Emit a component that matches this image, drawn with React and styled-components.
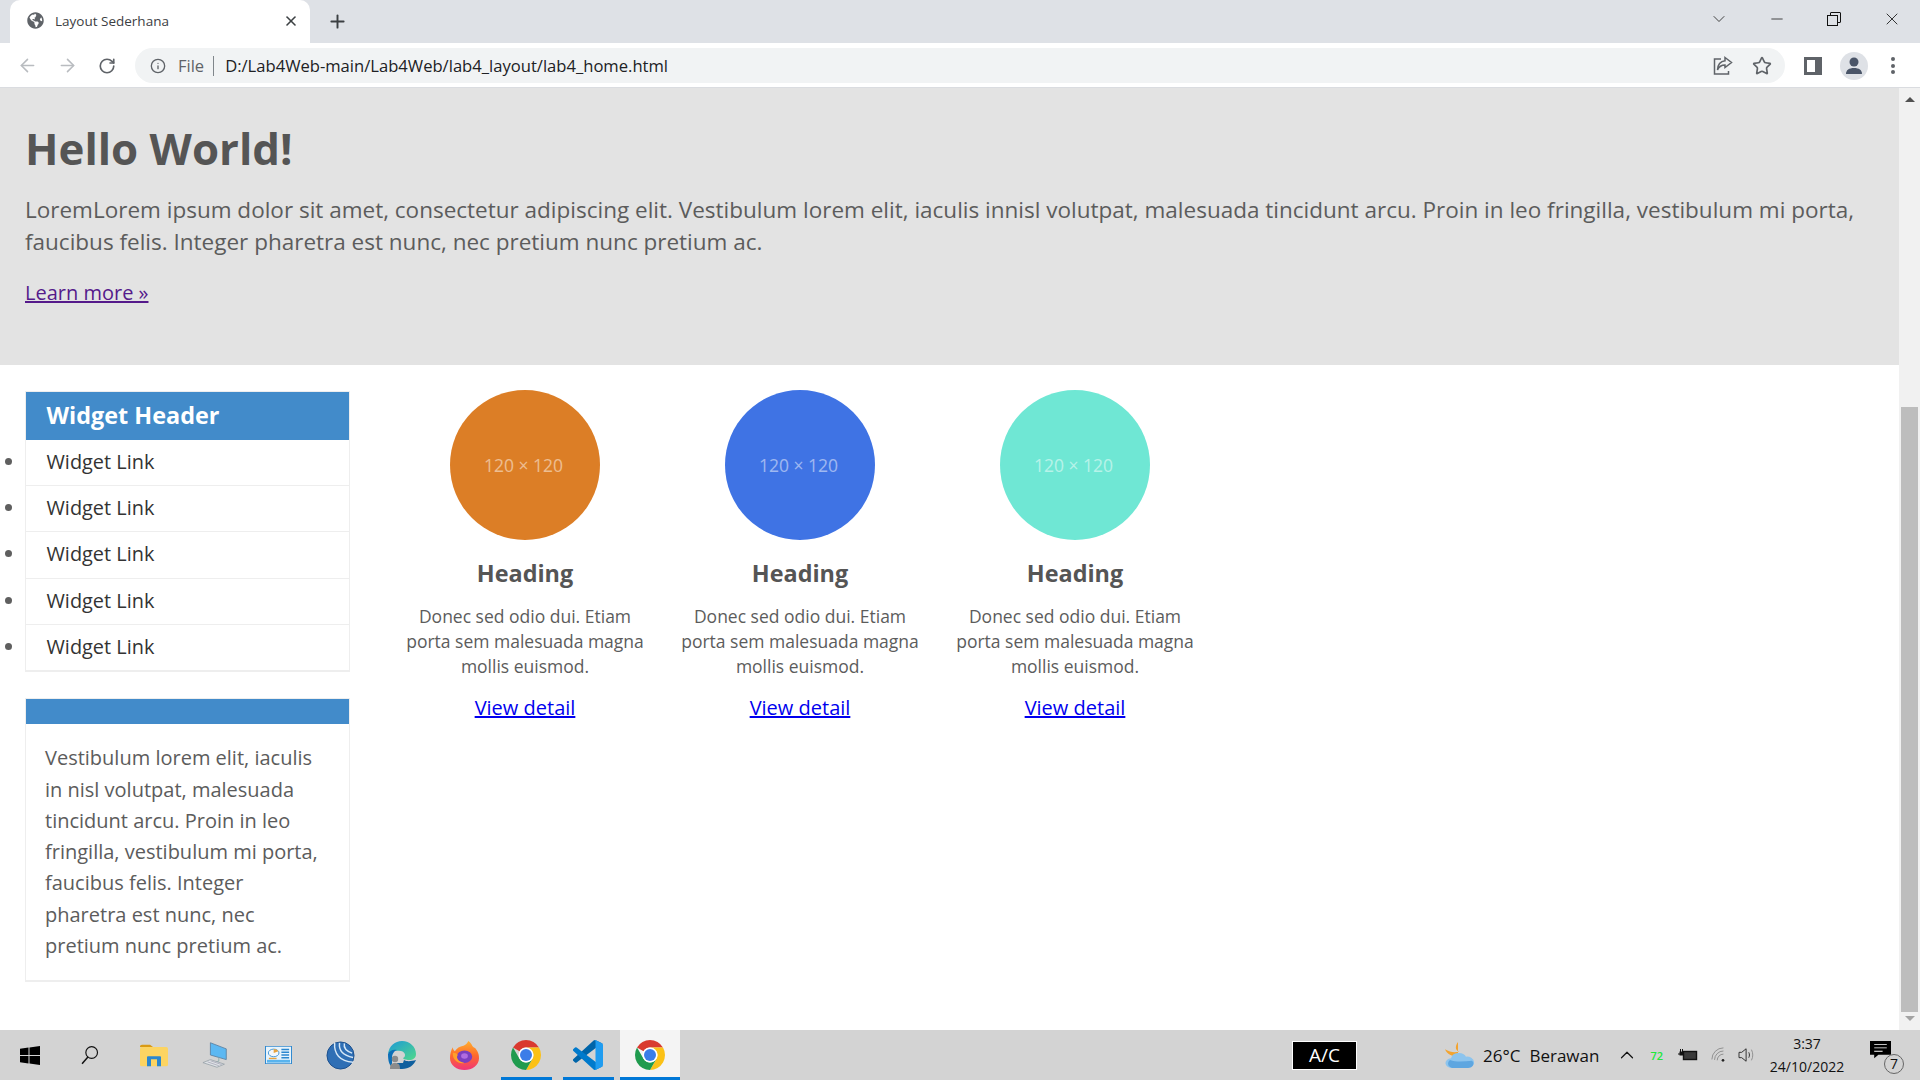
import styled, { createGlobalStyle } from 'styled-components';
import { ArrowLeft, ArrowRight, RotateCw, Info, Star, X, Plus, ChevronDown, ChevronUp, Minus } from 'lucide-react';
import { FaGlobeAmericas } from 'react-icons/fa';

const GlobalStyle = createGlobalStyle`
  html, body { margin: 0; padding: 0; height: 100%; overflow: hidden; }
  body { font-family: "Open Sans", "Liberation Sans", sans-serif; color: #555; }
  * { box-sizing: border-box; }
`;

const columns = [
  { color: '#dc7e26' },
  { color: '#3f73e4' },
  { color: '#6fe7d4' },
];

const Windows = () => (
  <svg width="20" height="19" viewBox="0 0 20 20" fill="#000" preserveAspectRatio="none">
    <path d="M0 3l8.500-1.300v7.800H0zM9.500 1.500L20 0v9.500H9.500zM0 10.500h8.500v7.800L0 17zM9.500 10.500H20V20L9.500 18.500z" />
  </svg>
);

const SearchGlass = () => (
  <svg width="20" height="20" viewBox="0 0 22 24" fill="none" stroke="#111" strokeWidth="1.400">
    <circle cx="13" cy="9" r="7" />
    <path d="M8.500 14.500L1.500 22.500" strokeWidth="1.800" />
  </svg>
);

const Folder = () => (
  <svg width="28" height="23" viewBox="0 0 28 30" preserveAspectRatio="none">
    <path d="M0 3a2 2 0 0 1 2-2h8l3 3H0z" fill="#d99a14" />
    <rect y="4" width="28" height="25" rx="2" fill="#fcd462" />
    <path d="M7 29V17a1 1 0 0 1 1-1h12a1 1 0 0 1 1 1v12h-4v-9h-6v9z" fill="#2b87cf" />
  </svg>
);

const Monitor = () => (
  <svg width="28" height="26" viewBox="0 0 30 34" preserveAspectRatio="none">
    <path d="M9 1l17 8v14L9 17z" fill="#5cb8f2" stroke="#5a7fa0" strokeWidth="1" />
    <path d="M18 20v5l-3 1" fill="none" stroke="#8aa" strokeWidth="1" />
    <path d="M1 27l8-4 15 6-8 4z" fill="#dfe3e6" stroke="#9aa3aa" strokeWidth="1" />
    <path d="M6 26l12 5M9 24.500l12 5" stroke="#aab" strokeWidth="1" />
  </svg>
);

const ControlPanel = () => (
  <svg width="27" height="18" viewBox="0 0 28 26" preserveAspectRatio="none">
    <rect x="0.500" y="0.500" width="27" height="25" fill="#e8f4fc" stroke="#2b87cf" />
    <rect x="2" y="20" width="24" height="4" fill="#59b4ee" />
    <circle cx="9" cy="10" r="5.500" fill="#f4f8fb" stroke="#2b87cf" />
    <path d="M9 10V4.500a5.500 5.500 0 0 1 5 3z" fill="#e8a33d" />
    <path d="M17 5h8M17 9h8M17 13h8M17 17h8" stroke="#2b87cf" strokeWidth="2" />
    <rect x="4" y="17" width="8" height="2" fill="#e8a33d" />
  </svg>
);

const Winbox = () => (
  <svg width="29" height="29" viewBox="0 0 30 30">
    <circle cx="15" cy="15" r="14" fill="#2f6fb5" stroke="#1b4f8c" />
    <path d="M9 2c-1 11 5 19 19 20M14 2c-1 8 3 13 14 15M19 2.500c-1 5 2 8 8 10" fill="none" stroke="#d6e8f7" strokeWidth="1.500" />
  </svg>
);

const Edge = () => (
  <svg width="30" height="30" viewBox="0 0 30 30">
    <defs>
      <linearGradient id="edgeTop" x1="0" y1="0" x2="1" y2="1">
        <stop offset="0" stopColor="#1c9ad6" />
        <stop offset="1" stopColor="#52d88b" />
      </linearGradient>
    </defs>
    <path d="M1 14C2 6 8 1 15 1c8 0 14 6 14 13 0 4-3 6-7 6-3 0-6-1-6-2 3-1 3-6-2-7-6-1-12 0-13 3z" fill="url(#edgeTop)" />
    <path d="M1 14c1-3 5-5 9-4-3 1-5 4-5 8v9C2 25 1 20 1 14z" fill="#0c6fb8" />
    <path d="M15 29c-2 0-4 0-6-1l1-5h6l1-3c3 2 8 1 12 0-2 5-7 9-14 9z" fill="#0f5f9e" />
    <circle cx="8" cy="19" r="3.200" fill="#8c8c8c" />
    <path d="M3 29c0-4 1-6 5-6s5 2 5 6z" fill="#8c8c8c" />
  </svg>
);

const Firefox = () => (
  <svg width="29" height="29" viewBox="0 0 30 37" preserveAspectRatio="none">
    <defs>
      <linearGradient id="foxBody" x1="0" y1="0" x2="0" y2="1">
        <stop offset="0" stopColor="#ffb02e" />
        <stop offset="0.500" stopColor="#ff6a2b" />
        <stop offset="1" stopColor="#f0347a" />
      </linearGradient>
    </defs>
    <path d="M19 0c5 5 3 7 7 9 4 6 4 10 4 13 0 9-7 15-15 15S0 31 0 22C0 16 1 12 3 8c0 3 1 4 2 5 2-4 5-6 9-7 2-1 4-3 5-6z" fill="url(#foxBody)" />
    <circle cx="15" cy="20" r="8" fill="#7b3fbf" />
    <circle cx="15" cy="19" r="3.500" fill="#b06ce0" />
    <path d="M3 15c3 0 4 1 5 3-2 3 0 9 7 10-6 2-13-4-12-13z" fill="#ffa02a" />
  </svg>
);

const Chrome = () => (
  <svg width="30" height="30" viewBox="4 4 40 40">
    <path d="M6.680 14A20 20 0 0 1 41.320 14H24A10 10 0 0 0 15.340 19Z" fill="#d93a2f" />
    <path d="M41.320 14A20 20 0 0 1 24 44L32.660 29A10 10 0 0 0 24 14Z" fill="#fbc116" />
    <path d="M24 44A20 20 0 0 1 6.680 14L15.340 29A10 10 0 0 0 32.660 29Z" fill="#1f9b4e" />
    <circle cx="24" cy="24" r="10" fill="#fff" />
    <circle cx="24" cy="24" r="8" fill="#3b7de8" />
  </svg>
);

const VsCode = () => (
  <svg width="30" height="30" viewBox="0 0 100 100">
    <path d="M96.460 10.800 75.860.870a6.230 6.230 0 0 0-7.100 1.200L1.300 63.600a4.160 4.160 0 0 0 0 6.160l5.500 5a4.160 4.160 0 0 0 5.300.240L93.400 13.400a4.140 4.140 0 0 1 6.600 3.300v-.240a6.250 6.250 0 0 0-3.540-5.660z" fill="#0065a9" />
    <path d="M96.460 89.200 75.860 99.130a6.230 6.230 0 0 1-7.100-1.200L1.300 36.400a4.160 4.160 0 0 1 0-6.160l5.500-5a4.160 4.160 0 0 1 5.300-.240L93.400 86.600a4.140 4.140 0 0 0 6.600-3.300v.240a6.250 6.250 0 0 1-3.540 5.660z" fill="#007acc" />
    <path d="M75.860 99.130a6.230 6.230 0 0 1-7.100-1.200c2.300 2.300 6.240.670 6.240-2.580V4.650c0-3.250-3.940-4.880-6.240-2.580a6.230 6.230 0 0 1 7.100-1.200l20.600 9.900A6.250 6.250 0 0 1 100 16.400v67.200a6.250 6.250 0 0 1-3.540 5.630z" fill="#1f9cf0" />
  </svg>
);

const Cloud = () => (
  <svg width="30" height="26" viewBox="0 0 30 32" preserveAspectRatio="none">
    <path d="M14 0c-3 5-3 10 1 12-4 1-9 1-14-3 2 6 7 9 13 9z" fill="#f3a430" />
    <path d="M8 32a6 6 0 0 1-1-12 8 8 0 0 1 15-2 7 7 0 0 1 2 14z" fill="#8cc4ee" />
    <path d="M8 32a6 6 0 0 1-2-10c6 3 14 2 22 1 3 3 1 9-4 9z" fill="#5ea6e0" />
  </svg>
);

const BatteryPlug = () => (
  <svg width="20" height="14" viewBox="0 0 20 14">
    <rect x="5.500" y="3.500" width="13" height="8" fill="#3a3a3a" stroke="#111" strokeWidth="1.400" />
    <path d="M0 6h6M2.500 1v3M4.500 1v3" stroke="#111" strokeWidth="1" />
    <rect x="1.500" y="3.500" width="4" height="4" fill="#111" />
  </svg>
);

const Wifi = () => (
  <svg width="18" height="16" viewBox="0 0 18 18" fill="none" stroke="#888" strokeWidth="1">
    <path d="M1 14a13 13 0 0 1 13-13M4 14.500a10 10 0 0 1 10-10M7 15a7 7 0 0 1 7-7" />
    <circle cx="13.500" cy="15" r="1.500" fill="#222" stroke="none" />
  </svg>
);

const Speaker = () => (
  <svg width="20" height="16" viewBox="0 0 20 18" fill="none" stroke="#222" strokeWidth="1">
    <path d="M1 6h3l5-4v14l-5-4H1z" />
    <path d="M12 6c1 2 1 4 0 6" />
    <path d="M15 3c2 4 2 8 0 12" stroke="#888" />
  </svg>
);

const taskIcons = [
  { id: 'folder', icon: <Folder /> },
  { id: 'monitor', icon: <Monitor /> },
  { id: 'panel', icon: <ControlPanel /> },
  { id: 'winbox', icon: <Winbox /> },
  { id: 'edge', icon: <Edge /> },
  { id: 'firefox', icon: <Firefox /> },
  { id: 'chrome', icon: <Chrome />, running: true },
  { id: 'vscode', icon: <VsCode />, running: true },
  { id: 'chrome2', icon: <Chrome />, active: true },
];

export default function App() {
  return (
    <>
      <GlobalStyle />
      <Screen>
        <TabStrip>
          <Tab>
            <FaGlobeAmericas size={17} color="#5f6368" />
            <TabTitle>Layout Sederhana</TabTitle>
            <X size={16} strokeWidth={2.400} color="#3c4043" />
          </Tab>
          <NewTab>
            <Plus size={21} strokeWidth={2.200} color="#3c4043" />
          </NewTab>
          <WindowControls>
            <WindowButton $width={58}><ChevronDown size={20} strokeWidth={1} color="#222" /></WindowButton>
            <WindowButton $width={57}><Minus size={18} strokeWidth={1} color="#111" /></WindowButton>
            <WindowButton $width={58}>
              <svg width="14" height="14" viewBox="0 0 14 14" fill="none" stroke="#111">
                <path d="M3.500 3V1a.5.5 0 0 1 .5-.5h9a.5.5 0 0 1 .5.5v9a.5.5 0 0 1-.5.5h-2" />
                <rect x="0.500" y="3.500" width="10" height="10" />
              </svg>
            </WindowButton>
            <WindowButton $width={57}><X size={20} strokeWidth={1} color="#111" /></WindowButton>
          </WindowControls>
        </TabStrip>

        <Toolbar>
          <NavButton><ArrowLeft size={21} color="#b9bcc0" strokeWidth={1.800} /></NavButton>
          <NavButton><ArrowRight size={21} color="#b9bcc0" strokeWidth={1.800} /></NavButton>
          <NavButton><RotateCw size={18} color="#5f6368" strokeWidth={2.200} /></NavButton>
          <AddressBar>
            <Info size={16} color="#5f6368" strokeWidth={2} />
            <FileLabel>File</FileLabel>
            <AddressDivider />
            <Url>D:/Lab4Web-main/Lab4Web/lab4_layout/lab4_home.html</Url>
            <AddressIcons>
              <svg width="20" height="20" viewBox="0 0 20 20" fill="none" stroke="#5f6368" strokeWidth="1.500">
                <path d="M8 3H1.500v15h14v-3" />
                <path d="M12 1.500l6.500 5-6.500 5V9c-4 0-6 1.500-7.500 5 0-5 3-9 7.500-9.300z" />
              </svg>
              <Star size={20} color="#5f6368" strokeWidth={2} />
            </AddressIcons>
          </AddressBar>
          <ToolbarEnd>
            <SidePanel />
            <Profile>
              <svg width="20" height="20" viewBox="0 0 20 20" fill="#4a5568">
                <circle cx="10" cy="6" r="4.500" />
                <path d="M2 18c0-4 3-6 8-6s8 2 8 6z" />
              </svg>
            </Profile>
            <MenuDots><i /><i /><i /></MenuDots>
          </ToolbarEnd>
        </Toolbar>

        <Viewport>
          <Page>
            <Hero>
              <HeroTitle>Hello World!</HeroTitle>
              <HeroText>
                LoremLorem ipsum dolor sit amet, consectetur adipiscing elit. Vestibulum lorem elit, iaculis innisl volutpat, malesuada tincidunt arcu. Proin in leo fringilla, vestibulum mi porta, faucibus felis. Integer pharetra est nunc, nec pretium nunc pretium ac.
              </HeroText>
              <HeroLink href="#">Learn more »</HeroLink>
            </Hero>
            <Main>
              <Sidebar>
                <Widget>
                  <WidgetHeader>Widget Header</WidgetHeader>
                  <WidgetList>
                    {[0, 1, 2, 3, 4].map((n) => (
                      <WidgetItem key={n}><WidgetLink>Widget Link</WidgetLink></WidgetItem>
                    ))}
                  </WidgetList>
                </Widget>
                <Widget>
                  <WidgetHeader $empty />
                  <WidgetBody>
                    Vestibulum lorem elit, iaculis in nisl volutpat, malesuada tincidunt arcu. Proin in leo fringilla, vestibulum mi porta, faucibus felis. Integer pharetra est nunc, nec pretium nunc pretium ac.
                  </WidgetBody>
                </Widget>
              </Sidebar>
              <Columns>
                {columns.map((col) => (
                  <Column key={col.color}>
                    <Circle $color={col.color}>120 × 120</Circle>
                    <ColumnHeading>Heading</ColumnHeading>
                    <ColumnText>Donec sed odio dui. Etiam porta sem malesuada magna mollis euismod.</ColumnText>
                    <DetailLink href="#">View detail</DetailLink>
                  </Column>
                ))}
              </Columns>
            </Main>
          </Page>
          <Scrollbar>
            <ArrowUp />
            <ThumbTrack><Thumb /></ThumbTrack>
            <ArrowDown />
          </Scrollbar>
        </Viewport>

        <Taskbar>
          <StartItem><Windows /></StartItem>
          <SearchItem><SearchGlass /></SearchItem>
          {taskIcons.map((t) => (
            <TaskItem key={t.id} $active={t.active} $running={t.running}>{t.icon}</TaskItem>
          ))}
          <Tray>
            <AcBadge>A/C</AcBadge>
            <Weather>
              <Cloud />
              <WeatherText>26°C</WeatherText>
              <WeatherText>Berawan</WeatherText>
            </Weather>
            <TrayIcons>
              <ChevronUp size={22} strokeWidth={1.300} color="#111" />
              <GreenCount>72</GreenCount>
              <BatteryPlug />
              <WifiSlot><Wifi /></WifiSlot>
              <Speaker />
            </TrayIcons>
            <Clock>
              <span>3:37</span>
              <span>24/10/2022</span>
            </Clock>
            <Notify>
              <svg width="21" height="18" viewBox="0 0 20 21" preserveAspectRatio="none">
                <path d="M0 0h20v16H8l-4 4v-4H0z" fill="#000" />
                <path d="M4 4h12M4 8h12M4 12h8" stroke="#fff" strokeWidth="1" />
              </svg>
              <NotifyBadge>7</NotifyBadge>
            </Notify>
          </Tray>
        </Taskbar>
      </Screen>
    </>
  );
}

const Screen = styled.div`
  display: flex;
  flex-direction: column;
  height: 100vh;
  background: #fff;
`;
const TabStrip = styled.div`
  display: flex;
  align-items: flex-end;
  height: 43px;
  padding-left: 10px;
  background: #dee1e6;
`;
const Tab = styled.div`
  display: flex;
  align-items: center;
  width: 300px;
  height: 43px;
  padding: 0 11px 2px 17px;
  background: #fff;
  border-radius: 10px 10px 0 0;
`;
const TabTitle = styled.span`
  flex: 1;
  margin-left: 11px;
  font-size: 13.500px;
  color: #3c4043;
`;
const NewTab = styled.div`
  display: flex;
  align-items: center;
  justify-content: center;
  width: 30px;
  height: 43px;
  margin-left: 12px;
`;
const WindowControls = styled.div`
  display: flex;
  height: 43px;
  margin-left: auto;
`;
const WindowButton = styled.div`
  display: flex;
  align-items: center;
  justify-content: center;
  width: ${(p) => p.$width}px;
  height: 38px;
`;
const Toolbar = styled.div`
  display: flex;
  align-items: center;
  height: 45px;
  padding: 1px 0 0 7px;
  background: #fff;
  border-bottom: 1px solid #dadce0;
`;
const NavButton = styled.div`
  display: flex;
  align-items: center;
  justify-content: center;
  width: 40px;
  height: 35px;
`;
const AddressBar = styled.div`
  display: flex;
  align-items: center;
  width: 1650px;
  height: 35px;
  margin-left: 8px;
  padding: 0 13px 0 15px;
  background: #f1f3f4;
  border-radius: 18px;
`;
const FileLabel = styled.span`
  margin-left: 12px;
  font-size: 16.500px;
  color: #5f6368;
`;
const AddressDivider = styled.span`
  width: 1px;
  height: 20px;
  margin: 0 11px 0 9px;
  background: #80868b;
`;
const Url = styled.span`
  flex: 1;
  font-size: 16.600px;
  color: #202124;
`;
const AddressIcons = styled.div`
  display: flex;
  align-items: center;
  gap: 19px;
`;
const ToolbarEnd = styled.div`
  display: flex;
  align-items: center;
  margin-left: 19px;
`;
const SidePanel = styled.div`
  width: 18px;
  height: 18px;
  background: #fff;
  border: solid #5f6368;
  border-width: 3px 7px 3px 3px;
`;
const Profile = styled.div`
  display: flex;
  align-items: center;
  justify-content: center;
  width: 28px;
  height: 28px;
  margin-left: 18px;
  background: #dee1e6;
  border-radius: 50%;
`;
const MenuDots = styled.div`
  display: flex;
  flex-direction: column;
  gap: 2.500px;
  margin-left: 23px;
  i {
    display: block;
    width: 4px;
    height: 4px;
    background: #5f6368;
    border-radius: 50%;
  }
`;
const Viewport = styled.div`
  display: flex;
  flex: 1;
  min-height: 0;
`;
const Page = styled.div`
  flex: 1;
  min-width: 0;
`;
const Hero = styled.section`
  height: 277px;
  padding: 30px 25px 0;
  background: #e3e3e3;
`;
const HeroTitle = styled.h1`
  margin: 0;
  font-size: 43.800px;
  line-height: 60px;
  font-weight: 700;
  color: #555;
`;
const HeroText = styled.p`
  margin: 16px 0 0;
  font-size: 22.500px;
  line-height: 32px;
  color: #5c5c5c;
`;
const HeroLink = styled.a`
  display: block;
  margin-top: 20px;
  font-size: 20px;
  line-height: 30px;
  color: #551a8b;
`;
const Main = styled.main`
  display: flex;
  padding: 0 0 0 25px;
`;
const Sidebar = styled.aside`
  width: 325px;
  padding-top: 26px;
`;
const Widget = styled.div`
  margin-bottom: 26px;
  border: 1px solid #eee;
  border-bottom-width: 2px;
`;
const WidgetHeader = styled.h3`
  height: ${(p) => (p.$empty ? '25px' : '48px')};
  margin: 0;
  padding: 0 20.500px;
  font-size: 23.400px;
  line-height: 46px;
  font-weight: 700;
  color: #fff;
  background: #428bca;
`;
const WidgetList = styled.ul`
  margin: 0;
  padding: 0;
  list-style: none;
`;
const WidgetItem = styled.li`
  position: relative;
  height: 46.200px;
  border-bottom: 1px solid #eee;
  &:last-child { height: 45.500px; border-bottom: 0; }
  &::before {
    content: '';
    position: absolute;
    left: -21px;
    top: 18px;
    width: 7px;
    height: 7px;
    border-radius: 50%;
    background: #5f5f5f;
  }
`;
const WidgetLink = styled.span`
  display: block;
  padding-left: 20.500px;
  font-size: 19.900px;
  line-height: 44px;
  color: #333;
`;
const WidgetBody = styled.p`
  margin: 0;
  padding: 18px 19px 19px;
  font-size: 20px;
  line-height: 31.300px;
  color: #5c5c5c;
`;
const Columns = styled.div`
  display: flex;
  margin-left: 37.500px;
`;
const Column = styled.article`
  display: flex;
  flex-direction: column;
  align-items: center;
  width: 275px;
  padding: 25px 15px 0;
  text-align: center;
`;
const Circle = styled.div`
  display: flex;
  align-items: center;
  justify-content: center;
  width: 150px;
  height: 150px;
  padding-right: 3px;
  border-radius: 50%;
  font-size: 17.500px;
  color: rgba(255, 255, 255, 0.5);
  background: ${(p) => p.$color};
`;
const ColumnHeading = styled.h2`
  margin: 17px 0 0;
  font-size: 23.400px;
  line-height: 32px;
  font-weight: 700;
  color: #555;
`;
const ColumnText = styled.p`
  margin: 14.500px 0 0;
  font-size: 17.500px;
  line-height: 25px;
  color: #5c5c5c;
`;
const DetailLink = styled.a`
  margin-top: 14.500px;
  font-size: 20px;
  line-height: 30px;
  color: #0000ee;
`;
const Scrollbar = styled.div`
  display: flex;
  flex-direction: column;
  align-items: center;
  width: 21px;
  background: #f1f1f1;
`;
const ArrowUp = styled.div`
  width: 0;
  height: 0;
  margin-top: 9px;
  border: 5px solid transparent;
  border-top: 0;
  border-bottom: 5px solid #505050;
`;
const ArrowDown = styled.div`
  width: 0;
  height: 0;
  margin-bottom: 9px;
  border: 5px solid transparent;
  border-bottom: 0;
  border-top: 5px solid #a3a3a3;
`;
const ThumbTrack = styled.div`
  display: flex;
  flex: 1;
  align-items: flex-end;
  width: 17px;
  padding-bottom: 4px;
`;
const Thumb = styled.div`
  width: 100%;
  height: 605px;
  background: #bdbdbd;
`;
const Taskbar = styled.footer`
  display: flex;
  align-items: center;
  height: 50px;
  background: #d3d3d3;
`;
const StartItem = styled.div`
  display: flex;
  align-items: center;
  justify-content: center;
  width: 60px;
  height: 50px;
`;
const SearchItem = styled(StartItem)`
  width: 60px;
  margin-right: 3px;
`;
const TaskItem = styled.div`
  position: relative;
  display: flex;
  align-items: center;
  justify-content: center;
  width: 62px;
  height: 50px;
  background: ${(p) => (p.$active ? 'linear-gradient(90deg, transparent 1px, #f4f4f4 1px, #f4f4f4 61px, transparent 61px)' : 'transparent')};
  &::after {
    content: '';
    display: ${(p) => (p.$active || p.$running ? 'block' : 'none')};
    position: absolute;
    left: ${(p) => (p.$active ? '1px' : '6px')};
    right: ${(p) => (p.$active ? '1px' : '5px')};
    bottom: 0;
    height: 3px;
    background: #0078d7;
  }
`;
const Tray = styled.div`
  display: flex;
  align-items: center;
  margin-left: auto;
  height: 50px;
`;
const AcBadge = styled.div`
  display: flex;
  align-items: center;
  justify-content: center;
  width: 65px;
  height: 29px;
  font-size: 19px;
  color: #fff;
  background: #000;
  border: 1px solid #fff;
`;
const Weather = styled.div`
  display: flex;
  align-items: center;
  gap: 9px;
  margin-left: 87px;
`;
const WeatherText = styled.span`
  font-size: 17px;
  color: #111;
`;
const TrayIcons = styled.div`
  display: flex;
  align-items: center;
  gap: 13px;
  margin-left: 17px;
`;
const GreenCount = styled.span`
  margin: 0 2px 0 -1px;
  font-size: 11px;
  font-weight: 600;
  color: #20e83a;
`;
const WifiSlot = styled.span`
  display: flex;
  margin: 0 -4px 0 -1px;
`;
const Clock = styled.div`
  display: flex;
  flex-direction: column;
  align-items: center;
  width: 76px;
  margin-left: 12px;
  font-size: 14px;
  line-height: 23px;
  color: #111;
`;
const Notify = styled.div`
  position: relative;
  width: 34px;
  height: 34px;
  margin: 0 16px 0 25px;
  padding-top: 3px;
`;
const NotifyBadge = styled.span`
  position: absolute;
  right: 0;
  bottom: -2px;
  width: 20px;
  height: 20px;
  border: 1px solid #666;
  border-radius: 50%;
  font-size: 14px;
  line-height: 18px;
  text-align: center;
  color: #111;
  background: rgba(211, 211, 211, 0.6);
`;
